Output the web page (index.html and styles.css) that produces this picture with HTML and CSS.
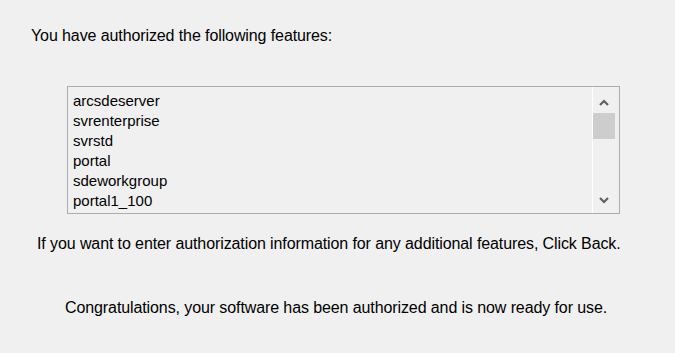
FILE: index.html
```html
<!DOCTYPE html>
<html lang="en">
<head>
    <meta charset="UTF-8">
    <title>Authorization Complete</title>
    <link rel="stylesheet" href="styles.css">
</head>
<body>
    <div class="dialog">
        <p class="title">You have authorized the following features:</p>

        <div class="features">
            <ul class="items">
                <li>arcsdeserver</li>
                <li>svrenterprise</li>
                <li>svrstd</li>
                <li>portal</li>
                <li>sdeworkgroup</li>
                <li>portal1_100</li>
            </ul>
            <div class="scroll">
                <div class="arrow up">
                    <svg width="10" height="7" viewBox="0 0 10 7"><path d="M1 6 L5 2 L9 6" fill="none" stroke="#606060" stroke-width="2.2"/></svg>
                </div>
                <div class="thumb"></div>
                <div class="track"></div>
                <div class="arrow down">
                    <svg width="10" height="7" viewBox="0 0 10 7"><path d="M1 1 L5 5 L9 1" fill="none" stroke="#606060" stroke-width="2.2"/></svg>
                </div>
            </div>
        </div>

        <p class="note">If you want to enter authorization information for any additional features, Click Back.</p>
        <p class="done">Congratulations, your software has been authorized and is now ready for use.</p>
    </div>
</body>
</html>
```

FILE: styles.css
```css
body {
    margin: 0;
    background-color: #f0f0f0;
    font-family: "Liberation Sans", Arial, sans-serif;
    color: #000;
}
.dialog {
    padding-top: 27px;
}
.dialog p {
    margin: 0;
    font-size: 16px;
    line-height: 18px;
    letter-spacing: -0.1px;
    white-space: nowrap;
}
.title {
    padding-left: 31px;
}
.features {
    display: flex;
    box-sizing: border-box;
    width: 553px;
    height: 128px;
    margin: 41px 0 0 67px;
    border: 1px solid #acacac;
}
.items {
    flex: 1;
    margin: 0;
    padding: 4px 0 0 5px;
    list-style: none;
    font-size: 15px;
    line-height: 20px;
}
.scroll {
    display: flex;
    flex-direction: column;
    width: 26px;
    border-left: 1px solid #fff;
}
.arrow {
    display: flex;
    justify-content: center;
    width: 22px;
    height: 26px;
}
.arrow.up {
    align-items: flex-end;
    height: 19px;
    margin-bottom: 7px;
}
.arrow.down {
    align-items: center;
}
.thumb {
    width: 22px;
    height: 26px;
    background-color: #cdcdcd;
}
.track {
    flex: 1;
}
.note {
    margin-top: 21px !important;
    padding-left: 37px;
}
.done {
    margin-top: 46px !important;
    padding-left: 65px;
}
```
